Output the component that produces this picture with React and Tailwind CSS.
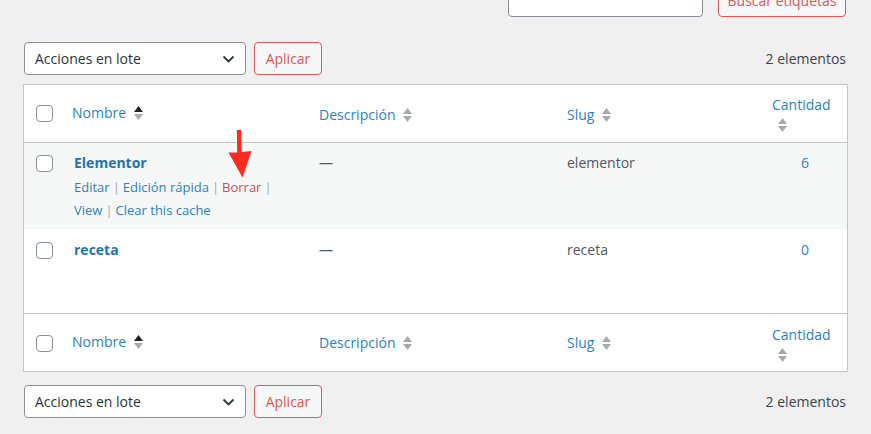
import React from "react";

const linkColor = "text-[#2a82bf]";

function SortArrows({ active = false }) {
  return (
    <svg width="9" height="14" viewBox="0 0 9 14" className="shrink-0">
      <polygon points="0,6 4.5,0 9,6" fill={active ? "#1d2327" : "#a7aaad"} />
      <polygon points="0,8 4.5,14 9,8" fill="#a7aaad" />
    </svg>
  );
}

function Checkbox() {
  return <span className="block h-[17px] w-[17px] rounded-[4px] border border-[#8c8f94] bg-white" />;
}

function BulkBar({ className = "" }) {
  return (
    <div className={`flex h-[33px] items-center pl-[24px] pr-[25px] ${className}`}>
      <div className="flex h-[33px] w-[222px] items-center justify-between rounded-[4px] border border-[#8c8f94] bg-white pl-[10px] pr-[10px] text-[14px] text-[#2c3338]">
        <span>Acciones en lote</span>
        <svg width="13" height="8" viewBox="0 0 13 8" fill="none">
          <path d="M1.5 1.5 6.5 6.5 11.5 1.5" stroke="#2c3338" strokeWidth="1.8" />
        </svg>
      </div>
      <button
        type="button"
        className="ml-[8px] h-[33px] w-[68px] rounded-[4px] border border-[#e05a5a] bg-[#f6f7f7] text-[14px] text-[#e05555]"
      >
        Aplicar
      </button>
      <span className="ml-auto text-[14px] text-[#3c434a]">2 elementos</span>
    </div>
  );
}

function HeaderRow({ footer = false }) {
  return (
    <div
      className={`grid h-[58px] grid-cols-[38px_247px_248px_200px_1fr] text-[14px] leading-[20px] ${
        footer ? "border-t border-[#c3c4c7]" : "border-b border-[#c3c4c7]"
      }`}
    >
      <div className={`pl-[12px] ${footer ? "pt-[21px]" : "pt-[20px]"}`}>
        <Checkbox />
      </div>
      <div className={`flex h-fit items-center gap-[8px] pl-[10px] ${footer ? "pt-[18px]" : "pt-[18px]"}`}>
        <span className={linkColor}>Nombre</span>
        <SortArrows active />
      </div>
      <div className={`flex h-fit items-center gap-[8px] pl-[10px] ${footer ? "pt-[19px]" : "pt-[20px]"}`}>
        <span className={linkColor}>Descripción</span>
        <SortArrows />
      </div>
      <div className={`flex h-fit items-center gap-[8px] pl-[10px] ${footer ? "pt-[19px]" : "pt-[20px]"}`}>
        <span className={linkColor}>Slug</span>
        <SortArrows />
      </div>
      <div className={`flex flex-col pl-[15px] ${footer ? "pt-[11px]" : "pt-[10px]"}`}>
        <span className={linkColor}>Cantidad</span>
        <span className="ml-[6px] mt-[3px]">
          <SortArrows />
        </span>
      </div>
    </div>
  );
}

function Sep() {
  return <span className="px-[3px] text-[#a7aaad]">|</span>;
}

function TermRow({ name, slug, count, striped, showActions }) {
  return (
    <div
      className={`grid grid-cols-[38px_247px_248px_200px_1fr] text-[14px] leading-[20px] ${
        striped ? "h-[86px] bg-[#f6f7f7]" : "h-[84px] bg-white"
      }`}
    >
      <div className={`pl-[12px] ${striped ? "pt-[12px]" : "pt-[13px]"}`}>
        <Checkbox />
      </div>
      <div className={`pl-[12px] ${striped ? "pt-[10px]" : "pt-[11px]"}`}>
        <div className="font-bold text-[#1f74ad]">{name}</div>
        {showActions ? (
          <div className="mt-[3px] text-[13px] leading-[23px] text-[#2a82bf]">
            <div>
              Editar
              <Sep />
              Edición rápida
              <Sep />
              <span className="text-[#c9504f]">Borrar</span>
              <Sep />
            </div>
            <div>
              View
              <Sep />
              Clear this cache
            </div>
          </div>
        ) : null}
      </div>
      <div className={`pl-[10px] text-[#50575e] ${striped ? "pt-[10px]" : "pt-[11px]"}`}>—</div>
      <div className={`pl-[10px] text-[#50575e] ${striped ? "pt-[10px]" : "pt-[11px]"}`}>{slug}</div>
      <div className={`pl-[44px] ${linkColor} ${striped ? "pt-[10px]" : "pt-[11px]"}`}>{count}</div>
    </div>
  );
}

export default function App() {
  return (
    <div
      className="relative h-[434px] w-[871px] overflow-hidden bg-[#f0f0f1]"
      style={{ fontFamily: '"Open Sans", "Noto Sans", sans-serif' }}
    >
      <div className="-mt-[16px] flex h-[33px] justify-end gap-[15px] pr-[25px]">
        <div className="h-[33px] w-[195px] rounded-[4px] border border-[#8c8f94] bg-white" />
        <button
          type="button"
          className="h-[33px] w-[128px] rounded-[4px] border border-[#e05a5a] bg-[#f6f7f7] text-[14px] text-[#e05555]"
        >
          Buscar etiquetas
        </button>
      </div>

      <BulkBar className="mt-[25px]" />

      <div className="mx-[23px] mt-[9px] border border-[#c3c4c7] bg-white">
        <HeaderRow />
        <TermRow name="Elementor" slug="elementor" count="6" striped showActions />
        <TermRow name="receta" slug="receta" count="0" />
        <HeaderRow footer />
      </div>

      <BulkBar className="mt-[13px]" />

      {/* red annotation arrow pointing at "Borrar" */}
      <svg className="absolute left-[224px] top-[128px]" width="32" height="52" viewBox="0 0 32 52">
        <path d="M12.8 2 L17.2 2 L17.6 24 L27.5 23 L18.5 49.5 L4.5 24.5 L13.2 24.5 Z" fill="#ff2a1f" />
      </svg>
    </div>
  );
}
